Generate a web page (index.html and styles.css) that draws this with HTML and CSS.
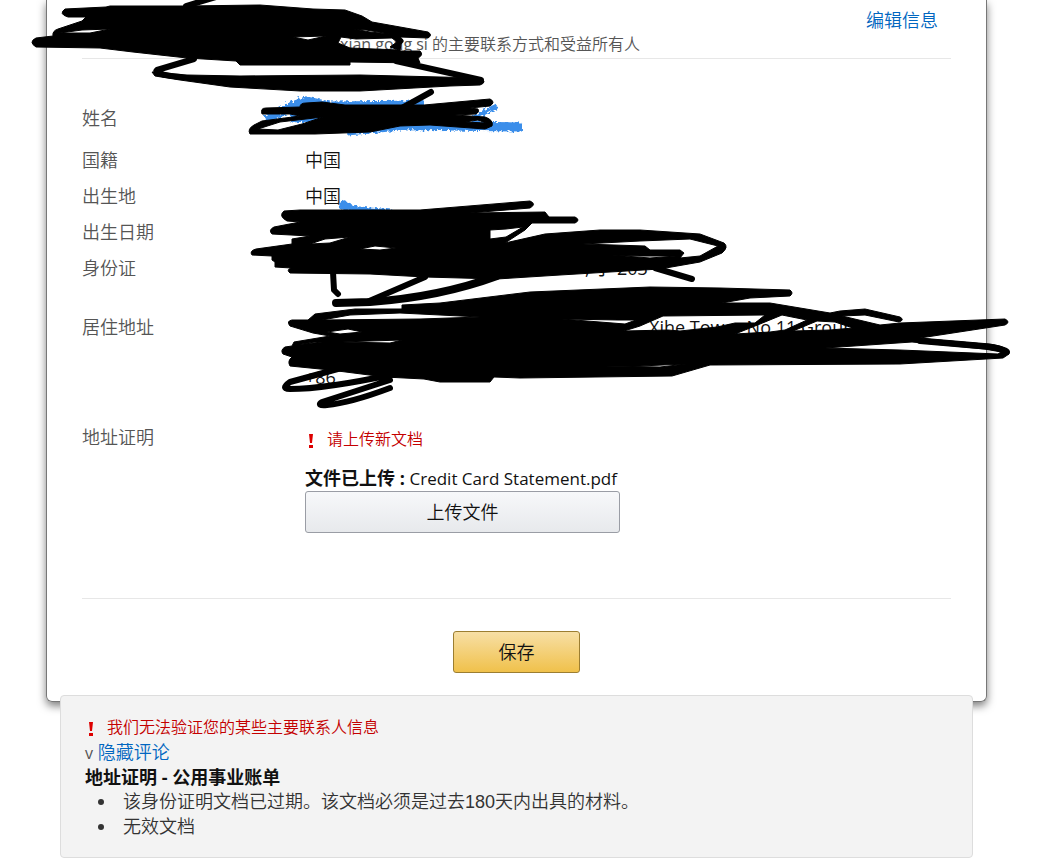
FILE: index.html
```html
<!DOCTYPE html>
<html lang="zh-CN">
<head>
  <meta charset="UTF-8" />
  <meta name="viewport" content="width=device-width, initial-scale=1.0"/>
  <title>主要联系人信息</title>
  <link rel="stylesheet" href="styles.css">
</head>
<body>
  <main class="page">
    <section class="card">
      <header class="card-header">
        <p class="subtitle"><span class="latin">xian gong si</span> 的主要联系方式和受益所有人</p>
        <a class="edit-link" href="#">编辑信息</a>
      </header>

      <form id="contactForm">
        <dl class="details">
          <div class="row row-name">
            <dt>姓名</dt>
            <dd></dd>
          </div>
          <div class="row">
            <dt>国籍</dt>
            <dd>中国</dd>
          </div>
          <div class="row">
            <dt>出生地</dt>
            <dd>中国</dd>
          </div>
          <div class="row">
            <dt>出生日期</dt>
            <dd></dd>
          </div>
          <div class="row">
            <dt>身份证</dt>
            <dd class="id-expiry">, 于 203</dd>
          </div>
          <div class="row row-address">
            <dt>居住地址</dt>
            <dd class="latin">
              <div class="address-line">Xihe Tower No 11 Group</div>
              <div class="phone">+86</div>
            </dd>
          </div>
          <div class="row row-proof">
            <dt>地址证明</dt>
            <dd>
              <p class="error">
                <svg class="alert-icon" viewBox="0 0 12 18" aria-hidden="true"><path d="M4 3h4l-1 9H5zM4 14h4v3H4z"/></svg>
                请上传新文档
              </p>
              <p class="file"><strong>文件已上传 :</strong> <span class="file-name">Credit Card Statement.pdf</span></p>
              <button type="button" class="btn btn-upload">上传文件</button>
            </dd>
          </div>
        </dl>

        <div class="actions">
          <button type="submit" class="btn btn-save">保存</button>
        </div>
      </form>
    </section>

    <section class="comments">
      <p class="error">
        <svg class="alert-icon" viewBox="0 0 12 18" aria-hidden="true"><path d="M4 3h4l-1 9H5zM4 14h4v3H4z"/></svg>
        我们无法验证您的某些主要联系人信息
      </p>
      <p class="toggle"><span class="caret">v</span> <a href="#">隐藏评论</a></p>
      <h2>地址证明 - 公用事业账单</h2>
      <ul>
        <li>该身份证明文档已过期。该文档必须是过去<span class="days">180</span>天内出具的材料。</li>
        <li>无效文档</li>
      </ul>
    </section>

    <!-- pen marks over the private details -->
    <svg class="marks" width="1048" height="420" viewBox="0 0 1048 420" aria-hidden="true">
      <defs>
        <filter id="rough" x="-10%" y="-50%" width="120%" height="200%">
          <feTurbulence type="fractalNoise" baseFrequency="0.4" numOctaves="2" result="noise"/>
          <feDisplacementMap in="SourceGraphic" in2="noise" scale="6"/>
        </filter>
      </defs>
      <g class="crayon" filter="url(#rough)">
        <path d="M266 120L292 106L306 101L330 106L424 105M290 118L430 112M347 131L400 126L490 125M450 126L522 127"/>
        <path class="thin" d="M474 118L485 112L497 106"/>
        <path d="M340 204L350 208"/>
        <path class="thin" d="M348 208L392 212"/>
      </g>
      <g class="ink">
        <path d="M68 17Q58 14 65 9L106 7L110 6L187 6L260 5L313 9L345 10L362 16L372 22L428 32Q433 35 428 38L400 37Q406 41 401 44L400 51L420 51Q424 55 418 58L420 63L350 62L350 65L240 65L236 61L187 58L133 52L100 48L36 47Q28 42 36 38L53 36Q52 31 58 29L82 21L86 17Z
          M60 33L82 30L110 29L90 33Z
          M293 37L326 36L308 40Z
          M338 43L341 37L356 39L392 38L397 42L390 47L399 50L350 48Z
          M354 29L366 30L390 34L370 32Z"/>
        <path d="M240 76L360 75L440 77L480 78Q488 82 480 85L450 86L360 91L300 91L230 87L180 80L155 76L152 72L187 75Z"/>
        <path d="M262 114Q260 108 266 108L300 107Q300 103 306 103L322 102L345 105L424 105L490 99Q496 102 490 106L470 108L478 109Q480 112 476 114L455 115L485 117Q494 120 492 126L485 129L430 125L400 126L370 132L315 134L250 134Q247 129 254 125L262 121L300 116L290 114Z
          M258 129L280 122L323 117L302 124L278 130Z
          M465 122L478 120L486 123Z"/>
        <path d="M287 221Q278 216 284 211L300 210L420 210L530 201Q537 204 530 208L470 213L545 212L549 217L575 217Q581 220 575 223L532 223L525 230L505 243L545 234L600 230L640 230L700 234L724 243Q729 247 722 253L700 262L660 269L610 272L560 275L497 279L425 277L370 274L290 273Q286 270 291 268L275 267L275 262L272 260L272 256L252 255Q249 251 256 249L292 244L292 239L310 236L272 234Q268 230 274 227L300 222Z
          M365 248L375 246L396 248L380 250L360 249Z
          M310 244L325 239L350 237L330 243Z
          M583 244L640 241L690 239L718 246L700 256L680 258L684 253L680 250L650 250L645 246Z
          M612 255L640 256L676 256L650 258Z
          M490 230L506 229L523 227L506 237L490 239Z"/>
        <path d="M402 309L402 305L440 303L530 292L650 287L720 288L790 290Q794 293 790 296L750 298L722 303L770 303L830 313L840 311L865 309L900 317Q905 320 899 322L865 315L842 316L880 325L900 323L1005 319Q1011 322 1005 325L920 338L990 344Q1010 347 1009 354L1003 358L900 364L710 365L672 376L520 378L494 377L490 382L440 382L424 379L385 377L330 370L290 366Q287 361 292 357L283 354Q280 350 285 347L292 346L294 342L330 336L313 333L290 326Q286 321 292 320L308 320L315 314L355 309Z
          M322 320L350 315L400 313L480 317L420 319Z
          M562 319L618 320L636 320L625 324Z
          M624 331L640 326L663 316L765 315L755 323L735 323L717 327L680 331L668 330Z
          M735 334L760 324L782 315L807 320L785 330L770 332Z
          M793 331L817 321L835 322L853 328L830 330Z
          M825 348L912 342L985 349L1001 352L998 354L900 350Z
          M605 366L640 366L686 364L660 367Z
          M342 342L370 341L402 340L390 343Z
          M295 345L315 342L322 342Z
          M327 332L348 329L362 332L340 334Z"/>
        <path class="pen" d="M186 6L216 -3M194 59L157 70Q152 74 180 77M396 61L481 80M431 92L402 108M920 341L990 347Q1006 349 1007 352"/>
        <path class="pen" d="M333 272L334 290L338 294M425 277L367 302M655 268L692 279"/>
        <path class="pen wide" d="M336 303L370 302Q440 297 497 276"/>
        <path class="pen" d="M345 367L290 382Q280 389 290 389Q325 389 395 374M390 380L322 402Q316 406 327 405Q350 403 390 388"/>
      </g>
    </svg>
  </main>
</body>
</html>
```

FILE: styles.css
```css
* {
  margin: 0;
  padding: 0;
  box-sizing: border-box;
}

body {
  background: #fff;
  color: #111;
  font-family: "Open Sans", "Noto Sans CJK SC", sans-serif;
  font-size: 18px;
  font-weight: 350;
  line-height: 25px;
}

a {
  color: #0066c0;
  text-decoration: none;
}

a:hover {
  text-decoration: underline;
}

.latin {
  font-weight: 400;
}

.page {
  position: relative;
}

.card {
  margin: 0 61px 0 46px;
  padding: 0 35px 28px;
  border: 1px solid #777;
  border-top: none;
  border-radius: 0 0 6px 6px;
  box-shadow: 0 4px 8px rgba(0, 0, 0, 0.5);
}

.card-header {
  display: flex;
  justify-content: space-between;
  align-items: flex-start;
  padding: 8px 13px 1px 0;
  border-bottom: 1px solid #e7e7e7;
}

.subtitle {
  padding: 24px 0 0 258px;
  color: #555;
  font-size: 16px;
}

.details {
  padding-top: 42px;
}

.row {
  display: grid;
  grid-template-columns: 223px 1fr;
  align-items: start;
  min-height: 36px;
  padding-top: 5px;
}

.row dt {
  color: #555;
}

.row-name {
  min-height: 42px;
}

.row .id-expiry {
  padding-left: 280px;
  font-weight: 400;
}

.row-address {
  margin-top: 23px;
}

.address-line {
  padding: 0 0 25px 344px;
}

.row-proof {
  margin-top: 30px;
}

.error {
  display: flex;
  align-items: center;
  gap: 10px;
  color: #c40000;
  font-size: 16px;
}

.row-proof .error {
  padding-top: 2px;
}

.alert-icon {
  width: 12px;
  height: 18px;
  fill: #d00;
}

.file {
  margin-top: 14px;
}

.file strong {
  font-weight: 700;
}

.file-name {
  font-size: 17px;
  font-weight: 400;
}

.btn {
  height: 42px;
  border: 1px solid #9a9da5;
  border-radius: 3px;
  color: #111;
  font: inherit;
  cursor: pointer;
}

.btn-upload {
  display: block;
  width: 315px;
  background: linear-gradient(#f7f8fa, #e7e9ec);
}

.actions {
  display: flex;
  justify-content: center;
  margin-top: 65px;
  padding-top: 32px;
  border-top: 1px solid #e7e7e7;
}

.btn-save {
  width: 127px;
  border-color: #9c7e31;
  background: linear-gradient(#f7dfa5, #f0c14b);
}

.comments {
  position: relative;
  margin: -7px 75px 0 60px;
  padding: 19px 24px 18px;
  border: 1px solid #ddd;
  border-radius: 4px;
  background: #f3f3f3;
}

.comments h2 {
  font-size: 18px;
  font-weight: 700;
  line-height: 24px;
}

.comments ul {
  padding-left: 32px;
  color: #333;
}

.comments li {
  padding-left: 6px;
}

.days {
  font-family: "Liberation Sans", sans-serif;
  font-weight: 400;
  line-height: 1;
}

.caret {
  color: #555;
  font-size: 16px;
  font-weight: 400;
  line-height: 1;
}

/* redaction strokes lie over the form */
.marks {
  position: absolute;
  top: 0;
  left: 0;
  pointer-events: none;
}

.ink {
  fill: #000;
  fill-rule: evenodd;
  stroke: #000;
  stroke-linejoin: round;
}

.pen {
  fill: none;
  stroke-width: 6;
  stroke-linecap: round;
}

.wide {
  stroke-width: 8;
}

.crayon {
  fill: none;
  stroke: #3b8eea;
  stroke-width: 9;
}

.crayon .thin {
  stroke-width: 5;
}
```
